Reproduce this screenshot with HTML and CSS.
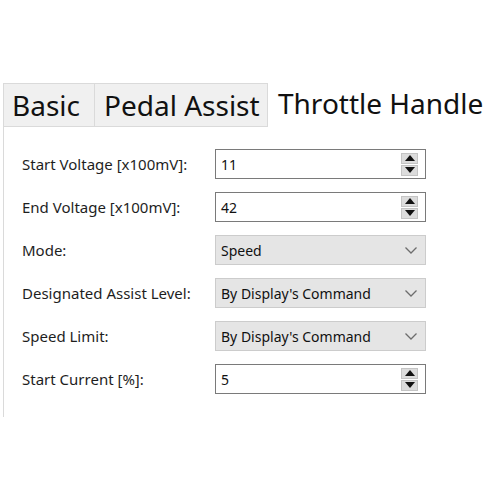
FILE: index.html
```html
<!DOCTYPE html>
<html>
<head>
<meta charset="utf-8">
<link rel="stylesheet" href="styles.css">
</head>
<body>
<div class="window">
  <div class="tabs">
    <div class="tab tab-basic">Basic</div>
    <div class="tab tab-pedal">Pedal Assist</div>
    <div class="tab tab-active">Throttle Handle</div>
  </div>
  <div class="panel">
    <div class="form">
      <div class="label">Start Voltage [x100mV]:</div>
      <div class="field spin"><span class="value">11</span>
        <span class="spinner"><span class="sbtn"><svg width="10" height="6" viewBox="0 0 10 6"><path d="M5 0 L10 6 L0 6 Z"/></svg></span><span class="sbtn"><svg width="10" height="6" viewBox="0 0 10 6"><path d="M0 0 L10 0 L5 6 Z"/></svg></span></span>
      </div>
      <div class="label">End Voltage [x100mV]:</div>
      <div class="field spin"><span class="value">42</span>
        <span class="spinner"><span class="sbtn"><svg width="10" height="6" viewBox="0 0 10 6"><path d="M5 0 L10 6 L0 6 Z"/></svg></span><span class="sbtn"><svg width="10" height="6" viewBox="0 0 10 6"><path d="M0 0 L10 0 L5 6 Z"/></svg></span></span>
      </div>
      <div class="label">Mode:</div>
      <div class="field combo"><span class="value">Speed</span>
        <svg class="chev" width="12" height="7" viewBox="0 0 12 7"><path d="M0.5 0.5 L6 6 L11.5 0.5" fill="none" stroke="#6d6d6d" stroke-width="1.3"/></svg>
      </div>
      <div class="label">Designated Assist Level:</div>
      <div class="field combo"><span class="value">By Display's Command</span>
        <svg class="chev" width="12" height="7" viewBox="0 0 12 7"><path d="M0.5 0.5 L6 6 L11.5 0.5" fill="none" stroke="#6d6d6d" stroke-width="1.3"/></svg>
      </div>
      <div class="label">Speed Limit:</div>
      <div class="field combo"><span class="value">By Display's Command</span>
        <svg class="chev" width="12" height="7" viewBox="0 0 12 7"><path d="M0.5 0.5 L6 6 L11.5 0.5" fill="none" stroke="#6d6d6d" stroke-width="1.3"/></svg>
      </div>
      <div class="label">Start Current [%]:</div>
      <div class="field spin"><span class="value">5</span>
        <span class="spinner"><span class="sbtn"><svg width="10" height="6" viewBox="0 0 10 6"><path d="M5 0 L10 6 L0 6 Z"/></svg></span><span class="sbtn"><svg width="10" height="6" viewBox="0 0 10 6"><path d="M0 0 L10 0 L5 6 Z"/></svg></span></span>
      </div>
    </div>
  </div>
</div>
</body>
</html>
```

FILE: styles.css
```css
html, body {
  margin: 0;
  padding: 0;
  background: #ffffff;
}
body {
  font-family: "Noto Sans", "Open Sans", sans-serif;
  color: #1a1a1a;
}
.window {
  padding-top: 83px;
  padding-left: 3px;
}
.tabs {
  display: flex;
  height: 44px;
}
.tab {
  box-sizing: border-box;
  height: 44px;
  font-size: 28px;
  line-height: 42px;
  color: #111;
  white-space: nowrap;
}
.tab-basic {
  width: 92px;
  padding-left: 8px;
  background: #f0f0f0;
  border: 1px solid #dadada;
}
.tab-pedal {
  width: 173px;
  padding-left: 9px;
  background: #f0f0f0;
  border: 1px solid #dadada;
  border-left: none;
}
.tab-active {
  padding-left: 10px;
  background: #ffffff;
  line-height: 40px;
}
.panel {
  box-sizing: border-box;
  height: 290px;
  border-left: 1px solid #dadada;
  padding: 22px 0 0 18px;
}
.form {
  display: grid;
  grid-template-columns: 193px 211px;
  grid-auto-rows: 30px;
  row-gap: 13px;
  align-items: center;
}
.label {
  font-size: 15px;
  color: #1e1e1e;
  white-space: nowrap;
}
.field {
  box-sizing: border-box;
  height: 30px;
  display: flex;
  align-items: center;
  font-size: 14px;
  color: #111;
  padding-left: 5px;
}
.spin {
  border: 1px solid #7a7a7a;
  background: #ffffff;
}
.combo {
  border: 1px solid #cccccc;
  background: #e5e5e5;
}
.value {
  flex: 1;
}
.spinner {
  display: flex;
  flex-direction: column;
  gap: 1px;
  margin-right: 7px;
}
.sbtn {
  box-sizing: border-box;
  width: 17px;
  height: 11px;
  background: #dcdcdc;
  border: 1px solid #c4c4c4;
  display: flex;
  align-items: center;
  justify-content: center;
}
.sbtn svg path {
  fill: #111;
}
.chev {
  margin-right: 8px;
}
```
